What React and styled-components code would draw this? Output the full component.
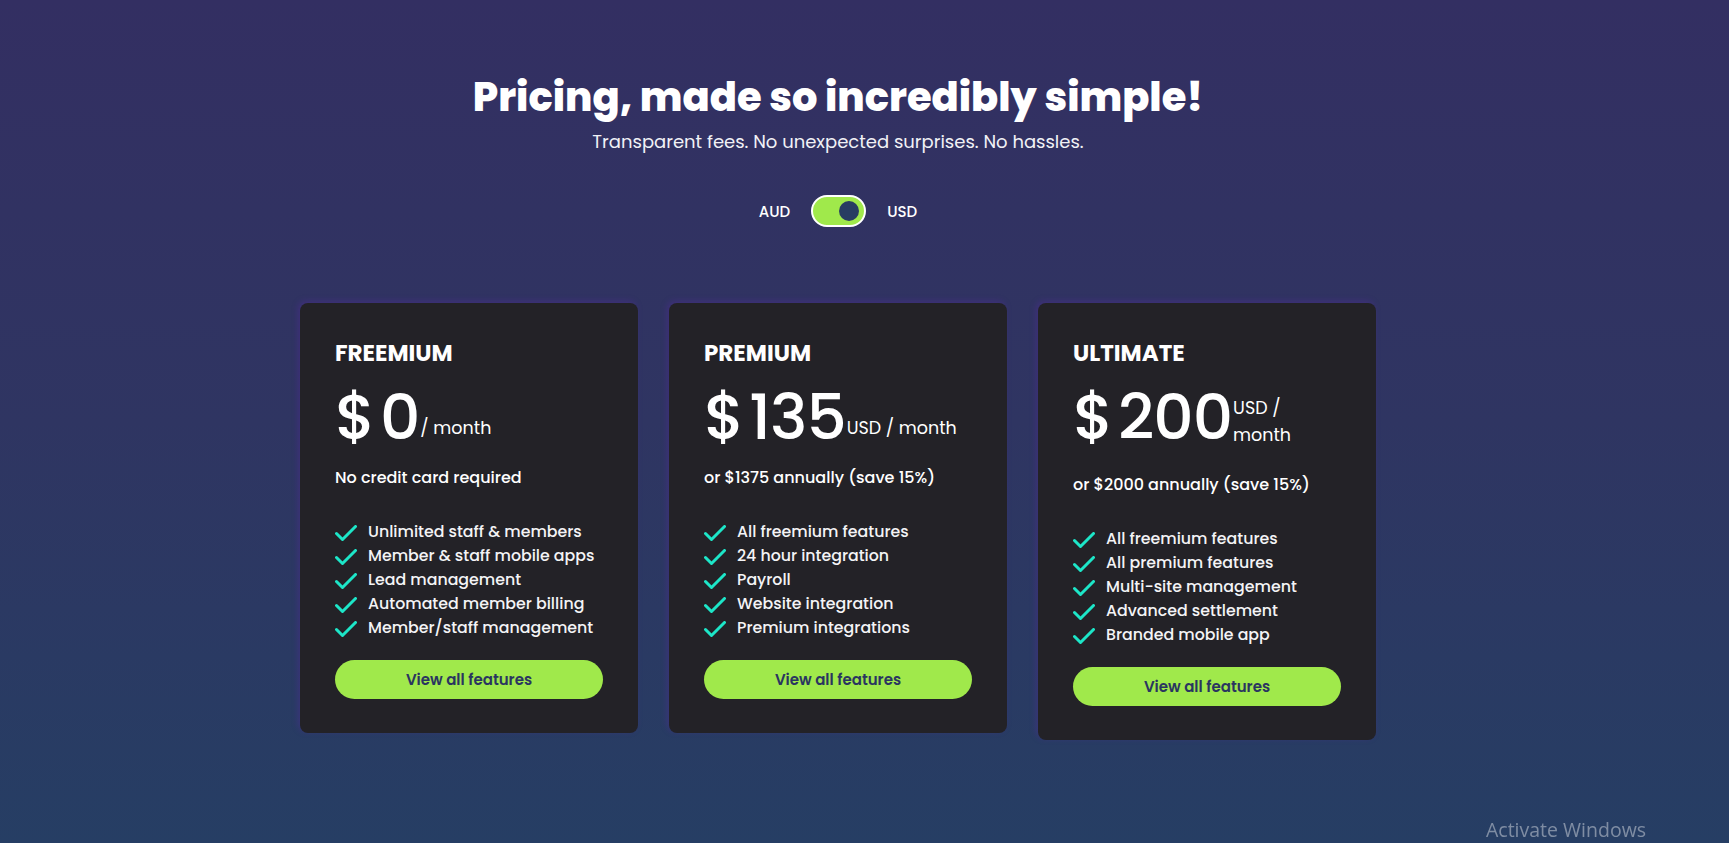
import React from 'react'
import styled, { createGlobalStyle } from 'styled-components'

const GlobalStyle = createGlobalStyle`
  html, body {
    margin: 0;
    padding: 0;
  }
  body {
    font-family: "Poppins", "Noto Sans", "Open Sans", sans-serif;
    color: #ffffff;
    background: #2b3762;
  }
  * {
    box-sizing: border-box;
  }
`;

const Page = styled.div`
  min-height: 843px;
  padding: 70px 53px 60px 0;
  background: linear-gradient(180deg, #332f62 0%, #2f3562 50%, #263e64 100%);
  display: flex;
  flex-direction: column;
  align-items: center;
`;

const Title = styled.h1`
  margin: 0;
  font-size: 40px;
  line-height: 54px;
  font-weight: 800;
`;

const Subtitle = styled.p`
  margin: 5px 0 0;
  font-size: 18px;
  line-height: 26px;
  font-weight: 400;
  color: #f1f1f6;
`;

const Switcher = styled.div`
  margin-top: 40px;
  display: flex;
  align-items: center;
  gap: 21px;
  font-size: 15px;
  font-weight: 500;
`;

const Toggle = styled.div`
  width: 55px;
  height: 32px;
  border-radius: 16px;
  border: 2px solid #ffffff;
  background: #a0e94b;
  display: flex;
  align-items: center;
  justify-content: ${p => (p.$on ? 'flex-end' : 'flex-start')};
  padding: 0 5px;
`;

const Knob = styled.span`
  width: 20px;
  height: 20px;
  border-radius: 50%;
  background: #283c62;
`;

const Cards = styled.div`
  margin-top: 76px;
  display: flex;
  align-items: flex-start;
  gap: 31px;
`;

const Card = styled.div`
  width: 338px;
  padding: 32px 35px 34px;
  background: #232227;
  border-radius: 8px;
  box-shadow: -2px -2px 6px rgba(92, 40, 170, 0.35);
`;

const PlanName = styled.h2`
  margin: 0;
  font-size: 23px;
  line-height: 36px;
  font-weight: 700;
  text-transform: uppercase;
`;

const PriceRow = styled.div`
  margin-top: 23px;
  display: flex;
  align-items: flex-end;
`;

const Amount = styled.span`
  align-self: flex-start;
  display: flex;
  font-size: 63px;
  line-height: 47px;
  font-weight: 500;
  letter-spacing: -1px;
`;

const Currency = styled.span`
  margin-right: 5px;
`;

const Per = styled.span`
  margin: 1px 0 -1px 1px;
  font-size: 17.5px;
  line-height: 27px;
  font-weight: 400;
`;

const Note = styled.p`
  margin: 25px 0 0;
  font-size: 16px;
  line-height: 24px;
  font-weight: 500;
`;

const Features = styled.ul`
  margin: 30px 0 0;
  padding: 0;
  list-style: none;
`;

const Feature = styled.li`
  display: flex;
  align-items: center;
  gap: 11px;
  font-size: 15.8px;
  line-height: 24px;
  font-weight: 500;
  color: #f4f4f6;
`;

const Check = styled.svg`
  flex: none;
  width: 22px;
  height: 17px;
  margin-top: 3px;
`;

const Button = styled.button`
  margin-top: 20px;
  width: 100%;
  height: 39px;
  border: none;
  border-radius: 20px;
  background: #a0e94b;
  color: #2a3560;
  font-family: inherit;
  font-size: 15px;
  font-weight: 600;
  cursor: pointer;
`;

const Watermark = styled.div`
  position: fixed;
  left: 1486px;
  top: 818px;
  font-family: "Open Sans", "Noto Sans", sans-serif;
  font-size: 19.5px;
  line-height: 24px;
  color: rgba(200, 205, 215, 0.55);
  pointer-events: none;
`;

const plans = [
  {
    name: 'Freemium',
    amount: '0',
    per: '/ month',
    note: 'No credit card required',
    features: [
      'Unlimited staff & members',
      'Member & staff mobile apps',
      'Lead management',
      'Automated member billing',
      'Member/staff management',
    ],
  },
  {
    name: 'Premium',
    amount: '135',
    per: 'USD / month',
    note: 'or $1375 annually (save 15%)',
    features: [
      'All freemium features',
      '24 hour integration',
      'Payroll',
      'Website integration',
      'Premium integrations',
    ],
  },
  {
    name: 'Ultimate',
    amount: '200',
    per: 'USD / month',
    note: 'or $2000 annually (save 15%)',
    features: [
      'All freemium features',
      'All premium features',
      'Multi-site management',
      'Advanced settlement',
      'Branded mobile app',
    ],
  },
];

const CheckIcon = () => (
  <Check viewBox="0 0 22 17">
    <polyline
      points="1.5,8.5 7.5,14.5 20.5,1.5"
      fill="none"
      stroke="#1de6c8"
      strokeWidth="3"
      strokeLinecap="round"
      strokeLinejoin="round"
    />
  </Check>
);

const App = () => {
  return (
    <>
      <GlobalStyle />
      <Page>
        <Title>Pricing, made so incredibly simple!</Title>
        <Subtitle>Transparent fees. No unexpected surprises. No hassles.</Subtitle>
        <Switcher>
          <span>AUD</span>
          <Toggle $on>
            <Knob />
          </Toggle>
          <span>USD</span>
        </Switcher>
        <Cards>
          {plans.map(plan => (
            <Card key={plan.name}>
              <PlanName>{plan.name}</PlanName>
              <PriceRow>
                <Amount>
                  <Currency>$</Currency>
                  {plan.amount}
                </Amount>
                <Per>{plan.per}</Per>
              </PriceRow>
              <Note>{plan.note}</Note>
              <Features>
                {plan.features.map(f => (
                  <Feature key={f}>
                    <CheckIcon />
                    {f}
                  </Feature>
                ))}
              </Features>
              <Button>View all features</Button>
            </Card>
          ))}
        </Cards>
      </Page>
      <Watermark>Activate Windows</Watermark>
    </>
  )
}

export default App
